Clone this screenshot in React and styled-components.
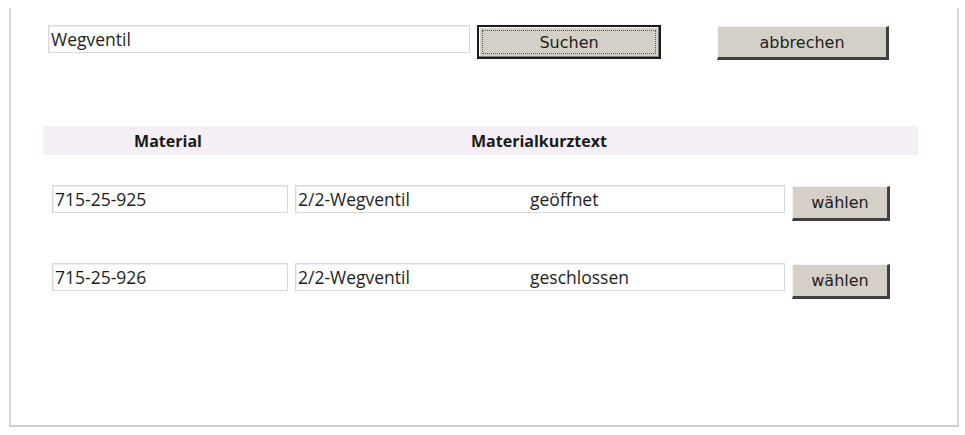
import styled, { createGlobalStyle } from 'styled-components';

const GlobalStyle = createGlobalStyle`
  html, body {
    margin: 0;
    padding: 0;
    background: #ffffff;
  }
  body {
    font-family: "Open Sans", "Noto Sans", sans-serif;
    color: #222222;
  }
`;

const Frame = styled.div`
  box-sizing: border-box;
  margin: 8px 0 0 9px;
  width: 950px;
  height: 419px;
  border-left: 2px solid #d6d6d6;
  border-right: 2px solid #d6d6d6;
  border-bottom: 2px solid #cfcfcf;
  box-shadow: 0 1px 0 #ececec;
  padding: 17px 0 0 37px;
`;

const SearchBar = styled.div`
  display: flex;
  align-items: flex-start;
`;

const Field = styled.div`
  box-sizing: border-box;
  display: flex;
  align-items: center;
  width: ${(p) => p.$width}px;
  height: 28px;
  padding: 0 2px;
  border: 1px solid #ddd7da;
  box-shadow: inset 1px 1px 0 #f1eef0;
  background: #ffffff;
  font-size: 17.5px;
  color: #1e1e1e;
  white-space: nowrap;
`;

const Part = styled.span`
  display: inline-block;
  width: ${(p) => p.$width || 'auto'};
`;

const Button = styled.button`
  box-sizing: border-box;
  position: relative;
  width: ${(p) => p.$width}px;
  height: ${(p) => p.$height || 34}px;
  margin-left: ${(p) => p.$gap}px;
  margin-top: ${(p) => p.$offset || 0}px;
  padding: 0;
  background: #d4d0c8;
  font-family: "DejaVu Sans", sans-serif;
  font-size: 16px;
  color: #1e1e1e;
  border-style: solid;
  border-width: 1px 3px 3px 1px;
  border-color: #f4f4f4 #404040 #404040 #f4f4f4;
  cursor: pointer;

  ${(p) =>
    p.$focused &&
    `
    border: 2px solid #1a1a1a;
    box-shadow: inset -1px -1px 0 #808080, inset 1px 1px 0 #ffffff;
    &::after {
      content: '';
      position: absolute;
      inset: 3px;
      border: 1px dotted #555555;
    }
  `}
`;

const HeaderBar = styled.div`
  display: grid;
  grid-template-columns: 250px 492px 1fr;
  width: 875px;
  height: 29px;
  margin: 66px 0 0 -5px;
  background: #f3eff5;
  align-items: center;
  font-size: 16px;
  font-weight: 700;
  color: #1a1a1a;
`;

const HeaderCell = styled.div`
  text-align: center;
`;

const Rows = styled.div`
  display: flex;
  flex-direction: column;
  gap: 42px;
  margin: 30px 0 0 4px;
`;

const Row = styled.div`
  display: flex;
  align-items: flex-start;
  gap: 7px;
`;

const results = [
  { id: '715-25-925', name: '2/2-Wegventil', state: 'geöffnet' },
  { id: '715-25-926', name: '2/2-Wegventil', state: 'geschlossen' },
];

function App() {
  return (
    <>
      <GlobalStyle />
      <Frame>
        <SearchBar>
          <Field $width={422}>Wegventil</Field>
          <Button $width={184} $gap={7} $focused>
            Suchen
          </Button>
          <Button $width={172} $gap={56} $offset={1}>
            abbrechen
          </Button>
        </SearchBar>

        <HeaderBar>
          <HeaderCell>Material</HeaderCell>
          <HeaderCell>Materialkurztext</HeaderCell>
        </HeaderBar>

        <Rows>
          {results.map((r) => (
            <Row key={r.id}>
              <Field $width={236}>{r.id}</Field>
              <Field $width={490}>
                <Part $width="232px">{r.name}</Part>
                <Part>{r.state}</Part>
              </Field>
              <Button $width={98} $height={35} $gap={0} $offset={1}>
                wählen
              </Button>
            </Row>
          ))}
        </Rows>
      </Frame>
    </>
  );
}

export default App;
